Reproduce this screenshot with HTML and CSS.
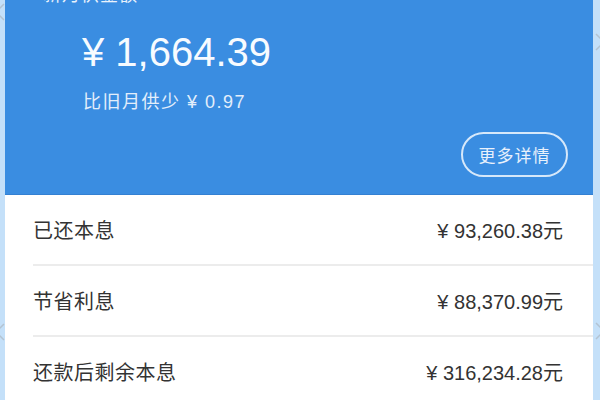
FILE: index.html
```html
<!DOCTYPE html>
<html lang="zh-CN">
<head>
    <meta charset="UTF-8">
    <meta name="viewport" content="width=device-width, initial-scale=1.0">
    <title>月供详情</title>
    <link rel="stylesheet" href="styles.css">
</head>
<body>

    <!-- Carousel arrows peeking in at the edges -->
    <svg class="edge-arrow arrow-left-top" viewBox="0 0 12 20"><path d="M10 2 L2 10 L10 18"/></svg>
    <svg class="edge-arrow arrow-left-mid" viewBox="0 0 12 20"><path d="M10 2 L2 10 L10 18"/></svg>
    <svg class="edge-arrow arrow-right-top" viewBox="0 0 12 20"><path d="M2 2 L10 10 L2 18"/></svg>
    <svg class="edge-arrow arrow-right-mid" viewBox="0 0 12 20"><path d="M2 2 L10 10 L2 18"/></svg>

    <div class="card">
        <!-- Monthly payment summary -->
        <section class="summary">
            <p class="summary-title">新月供金额</p>
            <p class="summary-amount">¥ 1,664.39</p>
            <p class="summary-diff">比旧月供少 ¥ 0.97</p>
            <div class="summary-actions">
                <a href="#" class="more-button">更多详情</a>
            </div>
        </section>

        <!-- Detail rows -->
        <ul class="detail-list">
            <li class="detail-row">
                <span class="detail-label">已还本息</span>
                <span class="detail-value">¥ 93,260.38元</span>
            </li>
            <li class="detail-row">
                <span class="detail-label">节省利息</span>
                <span class="detail-value">¥ 88,370.99元</span>
            </li>
            <li class="detail-row">
                <span class="detail-label">还款后剩余本息</span>
                <span class="detail-value">¥ 316,234.28元</span>
            </li>
        </ul>
    </div>

</body>
</html>
```

FILE: styles.css
```css
/* General Styles */
body {
    font-family: 'Liberation Sans', 'Noto Sans CJK SC', sans-serif;
    background-color: #c4e0f9;
    margin: 0;
    padding: 0 7px 0 5px;
    height: 400px;
    overflow: hidden;
    position: relative;
}

.card {
    background-color: #fff;
}

/* Summary (blue header) */
.summary {
    background-color: #3a8de1;
    border-bottom: 1px solid #3380d2;
    color: #fff;
    height: 194px;
    display: flex;
    flex-direction: column;
    overflow: hidden;
}
.summary p {
    margin: 0;
}
.summary-title {
    font-size: 18px;
    line-height: 18px;
    margin-top: -14px !important;
    margin-left: 38px !important;
    letter-spacing: 1px;
    color: #e9f2fc;
}
.summary-amount {
    font-size: 40px;
    line-height: 40px;
    margin-top: 28px !important;
    margin-left: 77px !important;
    color: #f7fbff;
}
.summary-diff {
    font-size: 18px;
    line-height: 18px;
    margin-top: 21px !important;
    margin-left: 78px !important;
    letter-spacing: 1.5px;
    color: #e3eefb;
}
.summary-actions {
    display: flex;
    justify-content: flex-end;
    padding-right: 25px;
    margin-top: 21px;
}
.more-button {
    display: flex;
    align-items: center;
    justify-content: center;
    width: 103px;
    height: 41px;
    border: 2px solid #d6e8fa;
    border-radius: 23px;
    color: #e8f1fc;
    font-size: 17px;
    letter-spacing: 1px;
    text-decoration: none;
}

/* Detail rows */
.detail-list {
    list-style: none;
    margin: 0;
    padding: 0;
}
.detail-row {
    display: flex;
    justify-content: space-between;
    align-items: center;
    height: 69px;
    margin-left: 28px;
    padding-right: 30px;
    border-bottom: 2px solid #ececec;
    color: #333;
    font-size: 20px;
}
.detail-label {
    letter-spacing: 0.5px;
}

/* Edge arrows */
.edge-arrow {
    position: absolute;
    width: 12px;
    height: 20px;
    fill: none;
    stroke: #b3c3d2;
    stroke-width: 1.5;
}
.arrow-left-top {
    left: -6px;
    top: 2px;
}
.arrow-left-mid {
    left: -6px;
    top: 322px;
}
.arrow-right-top {
    right: -6px;
    top: 32px;
}
.arrow-right-mid {
    right: -6px;
    top: 321px;
}
```
